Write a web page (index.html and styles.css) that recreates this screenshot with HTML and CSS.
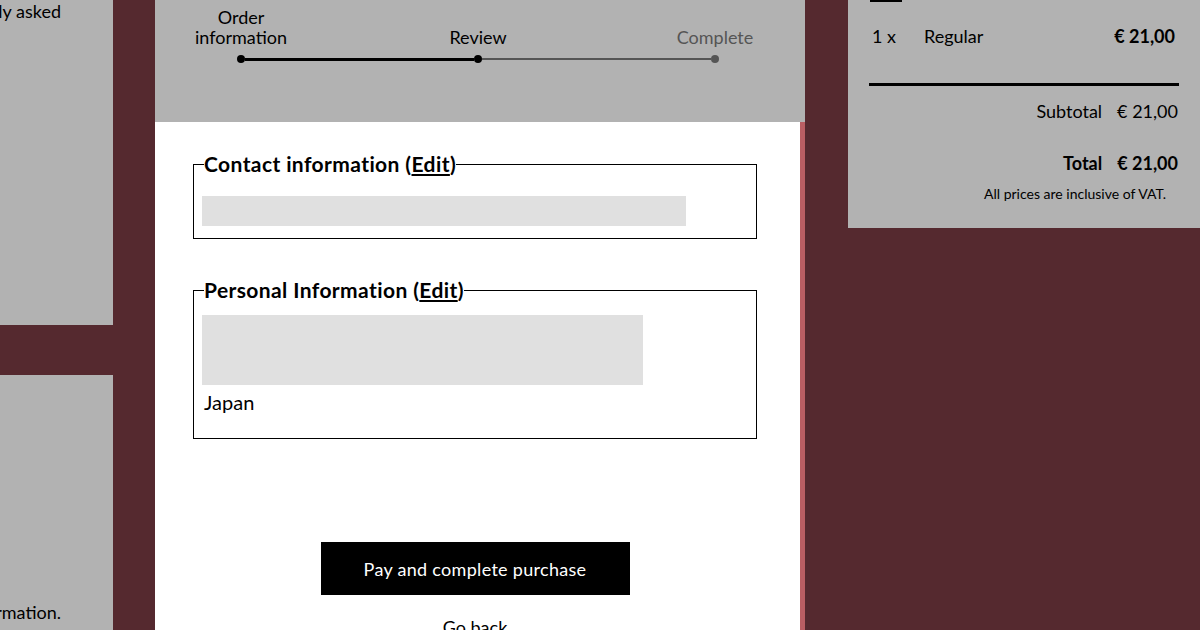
FILE: index.html
```html
<!DOCTYPE html>
<html lang="en">
<head>
<meta charset="utf-8" />
<title>Review your order</title>
<link rel="stylesheet" href="styles.css">
</head>
<body>
<div class="page">
    <aside class="side">
        <div class="sideCard sideCard-top">
            <p class="sideText">Questions you frequently asked</p>
        </div>
        <div class="sideCard sideCard-bottom">
            <p class="sideText">Contact us for more information.</p>
        </div>
    </aside>

    <main class="checkout">
        <div class="steps">
            <ol class="stepLabels">
                <li>Order<br />information</li>
                <li>Review</li>
                <li class="todo">Complete</li>
            </ol>
            <div class="track">
                <span class="dot"></span>
                <span class="seg"></span>
                <span class="dot"></span>
                <span class="seg seg-todo"></span>
                <span class="dot dot-todo"></span>
            </div>
        </div>

        <section class="review">
            <fieldset class="info info-contact">
                <legend>Contact information (<a href="#">Edit</a>)</legend>
                <div class="hidden hidden-email"></div>
            </fieldset>

            <fieldset class="info info-personal">
                <legend>Personal Information (<a href="#">Edit</a>)</legend>
                <div class="hidden hidden-address"></div>
                <p class="country">Japan</p>
            </fieldset>

            <button class="payBtn" type="button">Pay and complete purchase</button>
            <a class="backLink" href="#">Go back</a>
        </section>
    </main>

    <aside class="summary">
        <span class="stub"></span>
        <div class="item">
            <span class="qty">1 x</span>
            <span class="name">Regular</span>
            <span class="price">€ 21,00</span>
        </div>
        <div class="rule"></div>
        <div class="sum">
            <span>Subtotal</span>
            <span>€ 21,00</span>
        </div>
        <div class="sum sum-total">
            <span>Total</span>
            <span>€ 21,00</span>
        </div>
        <p class="vat">All prices are inclusive of VAT.</p>
    </aside>
</div>
</body>
</html>
```

FILE: styles.css
```css
*{margin: 0; padding: 0; box-sizing: border-box;}
ol{list-style: none;}
html, body{height: 630px; overflow: hidden;}
body{background: #55292f; color: #000; font-family: Lato, "Noto Sans", sans-serif; font-size: 18px;}

.page{display: flex; height: 630px;}

/* dimmed side column, its left part is off screen */
.side{width: 113px; display: flex; flex-direction: column; flex-shrink: 0;}
.sideCard{background: #b2b2b2; overflow: hidden; display: flex; justify-content: flex-end; padding-right: 52px;}
.sideCard-top{height: 325px; flex-shrink: 0; align-items: flex-start;}
.sideCard-bottom{flex: 1; margin-top: 50px; align-items: flex-end; padding-bottom: 7px;}
.sideText{white-space: nowrap; line-height: 22px;}

/* middle column */
.checkout{width: 650px; margin-left: 42px; display: flex; flex-direction: column; flex-shrink: 0;}

.steps{height: 122px; flex-shrink: 0; background: #b2b2b2; padding-top: 7px;}
.stepLabels{display: grid; grid-template-columns: repeat(3, 120px); column-gap: 117px; margin-left: 26px; align-items: end; text-align: center; line-height: 20px;}
.stepLabels .todo{color: #555;}
.track{display: flex; align-items: center; width: 482px; margin: 8px 0 0 82px;}
.dot{width: 8px; height: 8px; border-radius: 50%; background: #000;}
.seg{flex: 1; height: 3px; background: #000;}
.seg-todo{height: 2px; background: #555;}
.dot-todo{background: #555;}

.review{flex: 1; min-height: 0; background: #fff; border-right: 5px solid #b95e63; padding: 30px 43px 0 38px; display: flex; flex-direction: column; align-items: center;}

.info{width: 100%; flex-shrink: 0; border: 1px solid #000; padding: 0 8px;}
.info legend{padding: 0; margin-left: 2px; font-size: 21px; font-weight: 700; line-height: 24px; letter-spacing: 0.4px;}
.info legend a{color: inherit;}
.info-contact{padding-bottom: 12px;}
.info-personal{margin-top: 39px; padding-bottom: 24px;}

.hidden{background: #e0e0e0;}
.hidden-email{width: 484px; height: 30px; margin-top: 20px;}
.hidden-address{width: 441px; height: 70px; margin-top: 13px;}
.country{margin: 5px 0 0 2px; font-size: 20px; line-height: 24px;}

.payBtn{width: 309px; height: 53px; flex-shrink: 0; margin-top: 103px; border: 0; background: #000; color: #fff; font-family: inherit; font-size: 18px; letter-spacing: 0.3px; cursor: pointer;}
.backLink{margin-top: 20px; color: #000; text-decoration: none; line-height: 24px;}

/* order summary */
.summary{width: 352px; height: 228px; margin-left: 43px; background: #b2b2b2; padding: 0 21px; flex-shrink: 0;}
.stub{display: block; width: 32px; height: 2px; margin-left: 1px; background: #000;}
.item{display: flex; margin-top: 22px; line-height: 24px;}
.qty{width: 52px; margin-left: 3px;}
.price{margin-left: auto; padding-right: 4px; font-weight: 700;}
.rule{height: 3px; margin-top: 35px; background: #000;}
.sum{display: flex; justify-content: flex-end; gap: 15px; margin-top: 13px; padding-right: 1px; line-height: 24px;}
.sum-total{margin-top: 28px; font-weight: 700;}
.vat{margin-top: 10px; padding-right: 13px; text-align: right; font-size: 14px; line-height: 18px;}
```
